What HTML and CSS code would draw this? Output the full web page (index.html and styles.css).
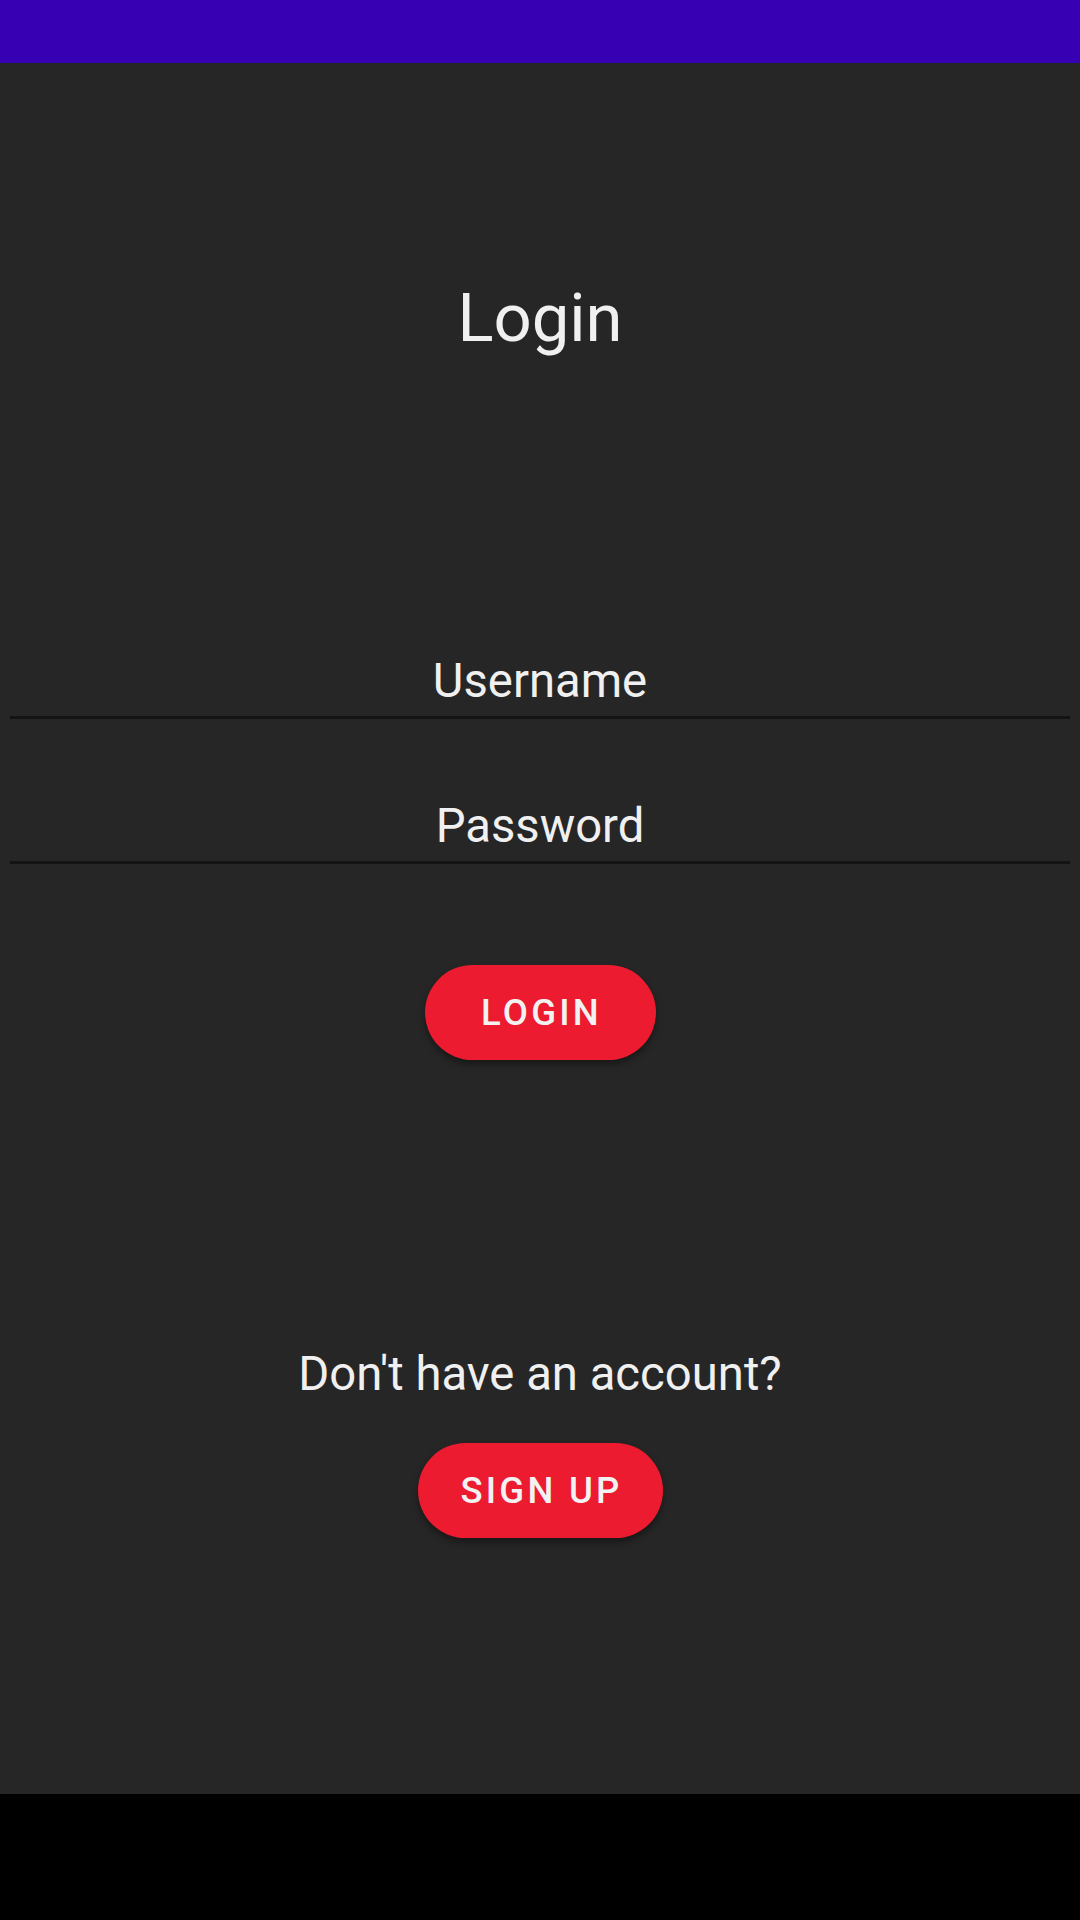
FILE: index.html
```html
<!DOCTYPE html>
<html>
<head>
<meta charset="utf-8">
<link rel="stylesheet" href="styles.css">
</head>
<body>
<div class="status"></div>
<main class="main">
  <h1 class="title">Login</h1>
  <div class="field field-user">Username</div>
  <div class="field field-pass">Password</div>
  <button class="btn btn-login">LOGIN</button>
  <p class="prompt">Don't have an account?</p>
  <button class="btn btn-signup">SIGN UP</button>
</main>
<div class="navbar"></div>
</body>
</html>
```
FILE: styles.css
```css
* { box-sizing: border-box; }
html, body {
  margin: 0;
  padding: 0;
  width: 1080px;
  height: 1920px;
  overflow: hidden;
  background: #262626;
  font-family: Roboto, "Liberation Sans", sans-serif;
  color: #f0f0f0;
}
.status {
  height: 63px;
  background: #3700b3;
}
.main {
  height: 1731px;
  background: #262626;
  display: flex;
  flex-direction: column;
  align-items: center;
}
.title {
  margin: 216px 0 0;
  font-size: 67px;
  line-height: 78px;
  font-weight: 400;
}
.field {
  align-self: stretch;
  margin: 0 10px;
  text-align: center;
  font-size: 47.25px;
  line-height: 54px;
  padding-bottom: 8px;
  border-bottom: 3px solid #141414;
}
.field-user { margin-top: 297px; }
.field-pass { margin-top: 80px; }
.btn {
  border: none;
  border-radius: 48px;
  background: #ed1b2f;
  color: #f2f2f2;
  font-family: Roboto, "Liberation Sans", sans-serif;
  font-weight: 500;
  font-size: 36.5px;
  letter-spacing: 0.089em;
  height: 95px;
  display: flex;
  align-items: center;
  justify-content: center;
  padding: 0 0 0 3px;
  box-shadow: 0 4px 7px rgba(0, 0, 0, 0.4);
}
.btn-login {
  width: 231px;
  margin-top: 101px;
}
.prompt {
  margin: 287px 0 0;
  font-size: 47.25px;
  line-height: 54px;
}
.btn-signup {
  width: 245px;
  margin-top: 42px;
}
.navbar {
  height: 126px;
  background: #000;
}
```
